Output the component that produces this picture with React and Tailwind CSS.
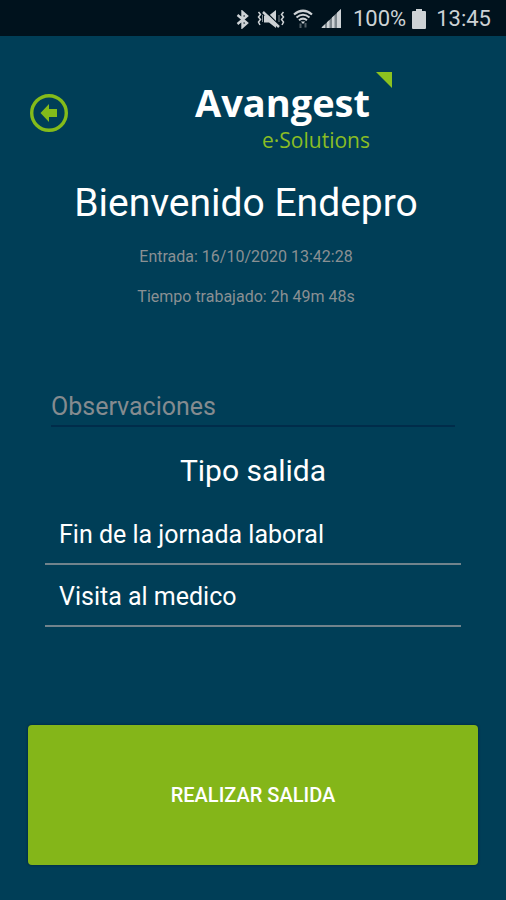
import React from 'react';

const exitTypes = ['Fin de la jornada laboral', 'Visita al medico'];

const BluetoothIcon = () => (
  <svg className="w-[13px] h-[19px]" viewBox="0 0 13 19" fill="none" stroke="currentColor" strokeWidth="2.4">
    <path d="M1.5 5 L11 13 L6.5 17 V2 L11 6 L1.5 14" />
  </svg>
);

const MuteIcon = () => (
  <svg className="w-7 h-5" viewBox="0 0 28 20" fill="none" stroke="currentColor">
    <path d="M7 6.5 H12 L19 1 V19 L12 13.5 H7 Z" fill="currentColor" stroke="none" />
    <path d="M8 2 L23 17" stroke="#00121d" strokeWidth="1.5" />
    <path d="M6 3 L22 18" strokeWidth="2.4" />
    <path d="M1.5 3 L3.5 5.5 L1.5 8 L3.5 10.5 L1.5 13 L3 16" strokeWidth="1.5" />
    <path d="M26.5 3 L24.5 5.5 L26.5 8 L24.5 10.5 L26.5 13 L25 16" strokeWidth="1.5" />
    <path d="M5.5 6 V13 M22 6 V13" strokeWidth="1" opacity="0.6" />
  </svg>
);

const WifiIcon = () => (
  <svg className="w-5 h-5" viewBox="0 0 20 20" fill="none" stroke="currentColor">
    <path d="M1 5.5 Q10 -2 19 5.5" strokeWidth="2.2" />
    <path d="M3.5 8.5 Q10 3 16.5 8.5" strokeWidth="2" />
    <path d="M6 11.3 Q10 8 14 11.3" strokeWidth="2" />
    <path d="M7.8 12.5 H12.2 L10 15 Z" fill="currentColor" stroke="none" />
    <path d="M7.5 19 V14.5 M12.5 14 V18.5" strokeWidth="2" opacity="0.4" />
  </svg>
);

const SignalIcon = () => (
  <svg className="w-5 h-5" viewBox="0 0 20 20" fill="currentColor">
    <path d="M0 19 L20 0 V19 Z" opacity="0.6" />
    <path d="M1 19 V18 L4 15.2 V19 Z M6 19 V13.3 L8.5 11 V19 Z M11 19 V8.6 L13.5 6.2 V19 Z M16 19 V3.8 L20 0 V19 Z" />
  </svg>
);

const BatteryIcon = () => (
  <svg className="w-3.5 h-5" viewBox="0 0 14 20" fill="currentColor">
    <path d="M4 0 H10 V2 H13 Q14 2 14 3 V19 Q14 20 13 20 H1 Q0 20 0 19 V3 Q0 2 1 2 H4 Z" />
  </svg>
);

const StatusBar = () => (
  <div className="flex h-9 items-center justify-end bg-[#00121d] pr-[15px] pt-0.5 text-[22px] leading-6 text-[#cdd2d5]">
    <div className="flex items-center gap-2">
      <BluetoothIcon />
      <MuteIcon />
      <WifiIcon />
      <SignalIcon />
    </div>
    <span className="ml-3">100%</span>
    <span className="ml-1.5">
      <BatteryIcon />
    </span>
    <span className="ml-2.5">13:45</span>
  </div>
);

const Logo = () => (
  <div className="flex items-start gap-1.5">
    <div className="pt-1.5 text-right font-['Open_Sans',sans-serif]">
      <p className="text-[38px] font-bold leading-[48px] text-white">Avangest</p>
      <p className="text-[21px] leading-7 text-[#8abd24]">e·Solutions</p>
    </div>
    <svg className="h-4 w-4" viewBox="0 0 16 16">
      <path d="M0 0 H16 V16 Z" fill="#8cc21f" />
    </svg>
  </div>
);

const App = () => {
  return (
    <div className="flex min-h-screen flex-col bg-[#003e57] font-[Roboto,sans-serif] text-white">
      <StatusBar />

      {/* Header */}
      <header className="flex items-center justify-between pl-[30px] pr-[114px] pt-9">
        <button type="button" aria-label="Volver" className="w-[38px] text-[#84bb1a]">
          <svg className="h-[38px] w-[38px]" viewBox="0 0 38 38" fill="none">
            <circle cx="19" cy="19" r="17.3" stroke="currentColor" strokeWidth="3.4" />
            <path d="M10.5 19 L19 10 V15 H27 V23 H19 V28 Z" fill="currentColor" />
          </svg>
        </button>
        <Logo />
      </header>

      {/* Welcome and worked time */}
      <section className="pr-3.5 text-center">
        <h1 className="mt-[25px] text-[39px] leading-[48px]">Bienvenido Endepro</h1>
        <p className="mt-5 text-base leading-5 text-[#8a9093]">Entrada: 16/10/2020 13:42:28</p>
        <p className="mt-5 text-base leading-5 text-[#8a9093]">Tiempo trabajado: 2h 49m 48s</p>
      </section>

      {/* Exit form */}
      <form className="flex flex-1 flex-col">
        <div className="mt-20 px-[51px]">
          <input
            type="text"
            aria-label="Observaciones"
            placeholder="Observaciones"
            className="h-10 w-full border-b-2 border-[#002c4a] bg-transparent text-[25px] placeholder-[#858b8f] outline-none"
          />
        </div>

        <h2 className="mt-6 text-center text-[30px] leading-10">Tipo salida</h2>

        <ul className="mt-3 px-[45px]">
          {exitTypes.map((type) => (
            <li key={type} className="border-b-2 border-[#71838c]">
              <button type="button" className="w-full px-3.5 pb-3 pt-4 text-left text-[25px] leading-8">
                {type}
              </button>
            </li>
          ))}
        </ul>

        <div className="mt-auto px-7 pb-[35px] pt-10">
          <button
            type="submit"
            className="h-[140px] w-full rounded-sm bg-[#84b619] text-xl font-medium shadow-[0_0_2px_1px_#00304a]"
          >
            REALIZAR SALIDA
          </button>
        </div>
      </form>
    </div>
  );
};

export default App;
